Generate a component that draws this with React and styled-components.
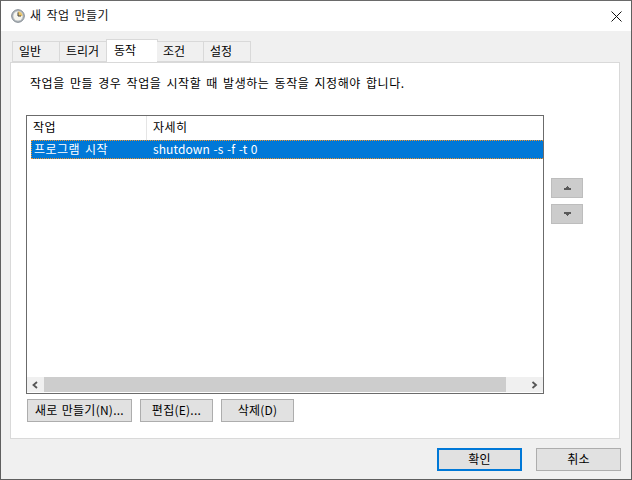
import React from "react";
import styled, { createGlobalStyle } from "styled-components";

const Global = createGlobalStyle`
  html, body { margin: 0; padding: 0; background: #fff; }
  * { box-sizing: border-box; }
  body { font-family: "Noto Sans CJK KR", "Liberation Sans", sans-serif; font-size: 12px; color: #000; }
`;
const Win = styled.div`
  width: 632px; height: 480px; border: 1px solid #5f5f5f; border-top-color: #6a6a6a;
  display: flex; flex-direction: column; background: #f0f0f0; overflow: hidden;
`;
const TitleBar = styled.div`
  height: 30px; background: #fff; display: flex; align-items: center; padding: 0 9px 0 10px; flex: none;
`;
const TitleText = styled.div`
  margin-left: 5px; padding-bottom: 2px; font-size: 12px; line-height: 16px; color: #111; flex: 1; letter-spacing: 0.5px; word-spacing: 1.7px;
`;
const Body = styled.div`
  flex: 1; display: flex; flex-direction: column; padding: 10px 10px 0 9px;
`;
const Tabs = styled.div`
  display: flex; height: 21px; padding-left: 2px; position: relative; z-index: 1; flex: none;
`;
const Tab = styled.div`
  width: ${p => p.$w}px; height: ${p => p.$active ? 23 : 21}px;
  margin-top: ${p => p.$active ? -2 : 0}px;
  margin-left: ${p => p.$active ? -1 : 0}px;
  margin-right: ${p => p.$active ? -1 : 0}px;
  background: ${p => p.$active ? "#fff" : "#f0f0f0"};
  border: 1px solid #d9d9d9;
  border-left-width: ${p => p.$first || p.$active ? 1 : 0}px;
  border-bottom-width: ${p => p.$active ? 0 : 1}px;
  display: flex; align-items: center; justify-content: flex-start;
  padding-left: ${p => p.$active ? 7 : 6}px;
  padding-bottom: ${p => p.$active ? 3 : 1}px;
  font-size: 12px; line-height: 16px; position: relative; white-space: nowrap;
`;
const Panel = styled.div`
  width: 610px; height: 377px; background: #fff; border: 1px solid #d9d9d9;
  padding: 10px 15px 0 15px; display: flex; flex-direction: column; flex: none;
`;
const Desc = styled.div`
  margin-left: 4px; height: 20px; line-height: 20px; font-size: 12px; letter-spacing: 0.55px; word-spacing: 1.9px; flex: none;
`;
const Middle = styled.div`
  margin-top: 22px; display: flex; flex: none;
`;
const List = styled.div`
  width: 518px; height: 279px; border: 1px solid #6b6b6b; display: flex; flex-direction: column; flex: none;
`;
const Header = styled.div`
  display: flex; height: 24px; flex: none;
`;
const HeadCell = styled.div`
  width: ${p => p.$w}px; padding-left: 6px; line-height: 22px; font-size: 12px; letter-spacing: 0.5px;
  ${p => p.$sep ? "border-right: 1px solid #e5e5e5;" : ""}
`;
const Row = styled.div`
  display: flex; height: 19px; margin-left: 4px; background: #0078d7; color: #fff;
  border-top: 1px dotted #f0932b; border-bottom: 1px dotted #f0932b; flex: none;
  border-left: 1px dotted #f0932b;
`;
const RowCell = styled.div`
  width: ${p => p.$w}px; padding-left: ${p => p.$pad}px; line-height: 16px; font-size: 12px; white-space: nowrap;
  letter-spacing: ${p => p.$ls}px; word-spacing: ${p => p.$ws}px;
`;
const Spacer = styled.div` flex: 1; `;
const ScrollBar = styled.div`
  height: 15px; margin-bottom: 1px; display: flex; background: #f0f0f0; flex: none;
`;
const ScrollBtn = styled.div`
  width: 17px; height: 15px; display: flex; align-items: center; justify-content: center; flex: none;
`;
const Thumb = styled.div` flex: 1; background: #cdcdcd; margin-right: 20px; `;
const Side = styled.div`
  margin: 63px 0 0 7px; display: flex; flex-direction: column; gap: 6px;
`;
const MoveBtn = styled.div`
  width: 32px; height: 20px; background: #cccccc; border: 1px solid #bdbdbd;
  display: flex; align-items: center; justify-content: center;
`;
const ActionRow = styled.div`
  display: flex; gap: 8px; margin: 5px 0 0 1px; flex: none;
`;
const Btn = styled.div`
  width: ${p => p.$w}px; height: 23px; background: #e1e1e1; border: ${p => p.$primary ? "2px solid #0078d7" : "1px solid #adadad"};
  display: flex; align-items: center; justify-content: center; font-size: 12px; line-height: 16px; flex: none;
  padding-bottom: 1px; white-space: nowrap; letter-spacing: 0.25px; word-spacing: 1.2px;
`;
const Footer = styled.div`
  display: flex; justify-content: flex-end; gap: 14px; margin-top: 9px; width: 611px; flex: none;
`;

const Clock = () => (
  <svg width="14" height="14" viewBox="0 0 14 14" style={{ flex: "none" }}>
    <circle cx="7" cy="7" r="6.3" fill="#b9bfc4" stroke="#7d858c" strokeWidth="1" />
    <circle cx="7" cy="7" r="4.6" fill="#f7f6ee" />
    <path d="M7 7V2.4A4.6 4.6 0 0 1 11.6 7Z" fill="#e9c46a" />
    <path d="M7 3.4V7H10" fill="none" stroke="#444" strokeWidth="1" />
  </svg>
);
const Close = () => (
  <svg width="11" height="11" viewBox="0 0 11 11" style={{ flex: "none" }}>
    <path d="M0.5 0.5L10.5 10.5M10.5 0.5L0.5 10.5" stroke="#111" strokeWidth="1" fill="none" />
  </svg>
);
const Tri = ({ down }) => (
  <svg width="7" height="4" viewBox="0 0 7 4" shapeRendering="crispEdges">
    <path d={down ? "M0 0H7V2H5V3H4V4H3V3H2V2H0Z" : "M3 0H4V1H5V2H7V4H0V2H2V1H3Z"} fill="#5a5a5a" />
  </svg>
);
const Chev = ({ right }) => (
  <svg width="7" height="8" viewBox="0 0 7 8">
    <path d={right ? "M1.5 1L5 4L1.5 7" : "M5 1L1.5 4L5 7"} fill="none" stroke="#555" strokeWidth="1.8" />
  </svg>
);

export default function App() {
  return (
    <>
      <Global />
      <Win>
        <TitleBar>
          <Clock />
          <TitleText>새 작업 만들기</TitleText>
          <Close />
        </TitleBar>
        <Body>
          <Tabs>
            <Tab $w={48} $first>일반</Tab>
            <Tab $w={47}>트리거</Tab>
            <Tab $w={52} $active>동작</Tab>
            <Tab $w={47}>조건</Tab>
            <Tab $w={47}>설정</Tab>
          </Tabs>
          <Panel>
            <Desc>작업을 만들 경우 작업을 시작할 때 발생하는 동작을 지정해야 합니다.</Desc>
            <Middle>
              <List>
                <Header>
                  <HeadCell $w={120} $sep>작업</HeadCell>
                  <HeadCell $w={396}>자세히</HeadCell>
                </Header>
                <Row>
                  <RowCell $w={116} $pad={2} $ls={0.5} $ws={1.7}>프로그램 시작</RowCell>
                  <RowCell $w={390} $pad={5} $ls={0.1} $ws={0.75}>shutdown -s -f -t 0</RowCell>
                </Row>
                <Spacer />
                <ScrollBar>
                  <ScrollBtn><Chev /></ScrollBtn>
                  <Thumb />
                  <ScrollBtn><Chev right /></ScrollBtn>
                </ScrollBar>
              </List>
              <Side>
                <MoveBtn><Tri /></MoveBtn>
                <MoveBtn><Tri down /></MoveBtn>
              </Side>
            </Middle>
            <ActionRow>
              <Btn $w={105}>새로 만들기(N)...</Btn>
              <Btn $w={73}>편집(E)...</Btn>
              <Btn $w={73}>삭제(D)</Btn>
            </ActionRow>
          </Panel>
          <Footer>
            <Btn $w={85} $primary>확인</Btn>
            <Btn $w={85}>취소</Btn>
          </Footer>
        </Body>
      </Win>
    </>
  );
}
